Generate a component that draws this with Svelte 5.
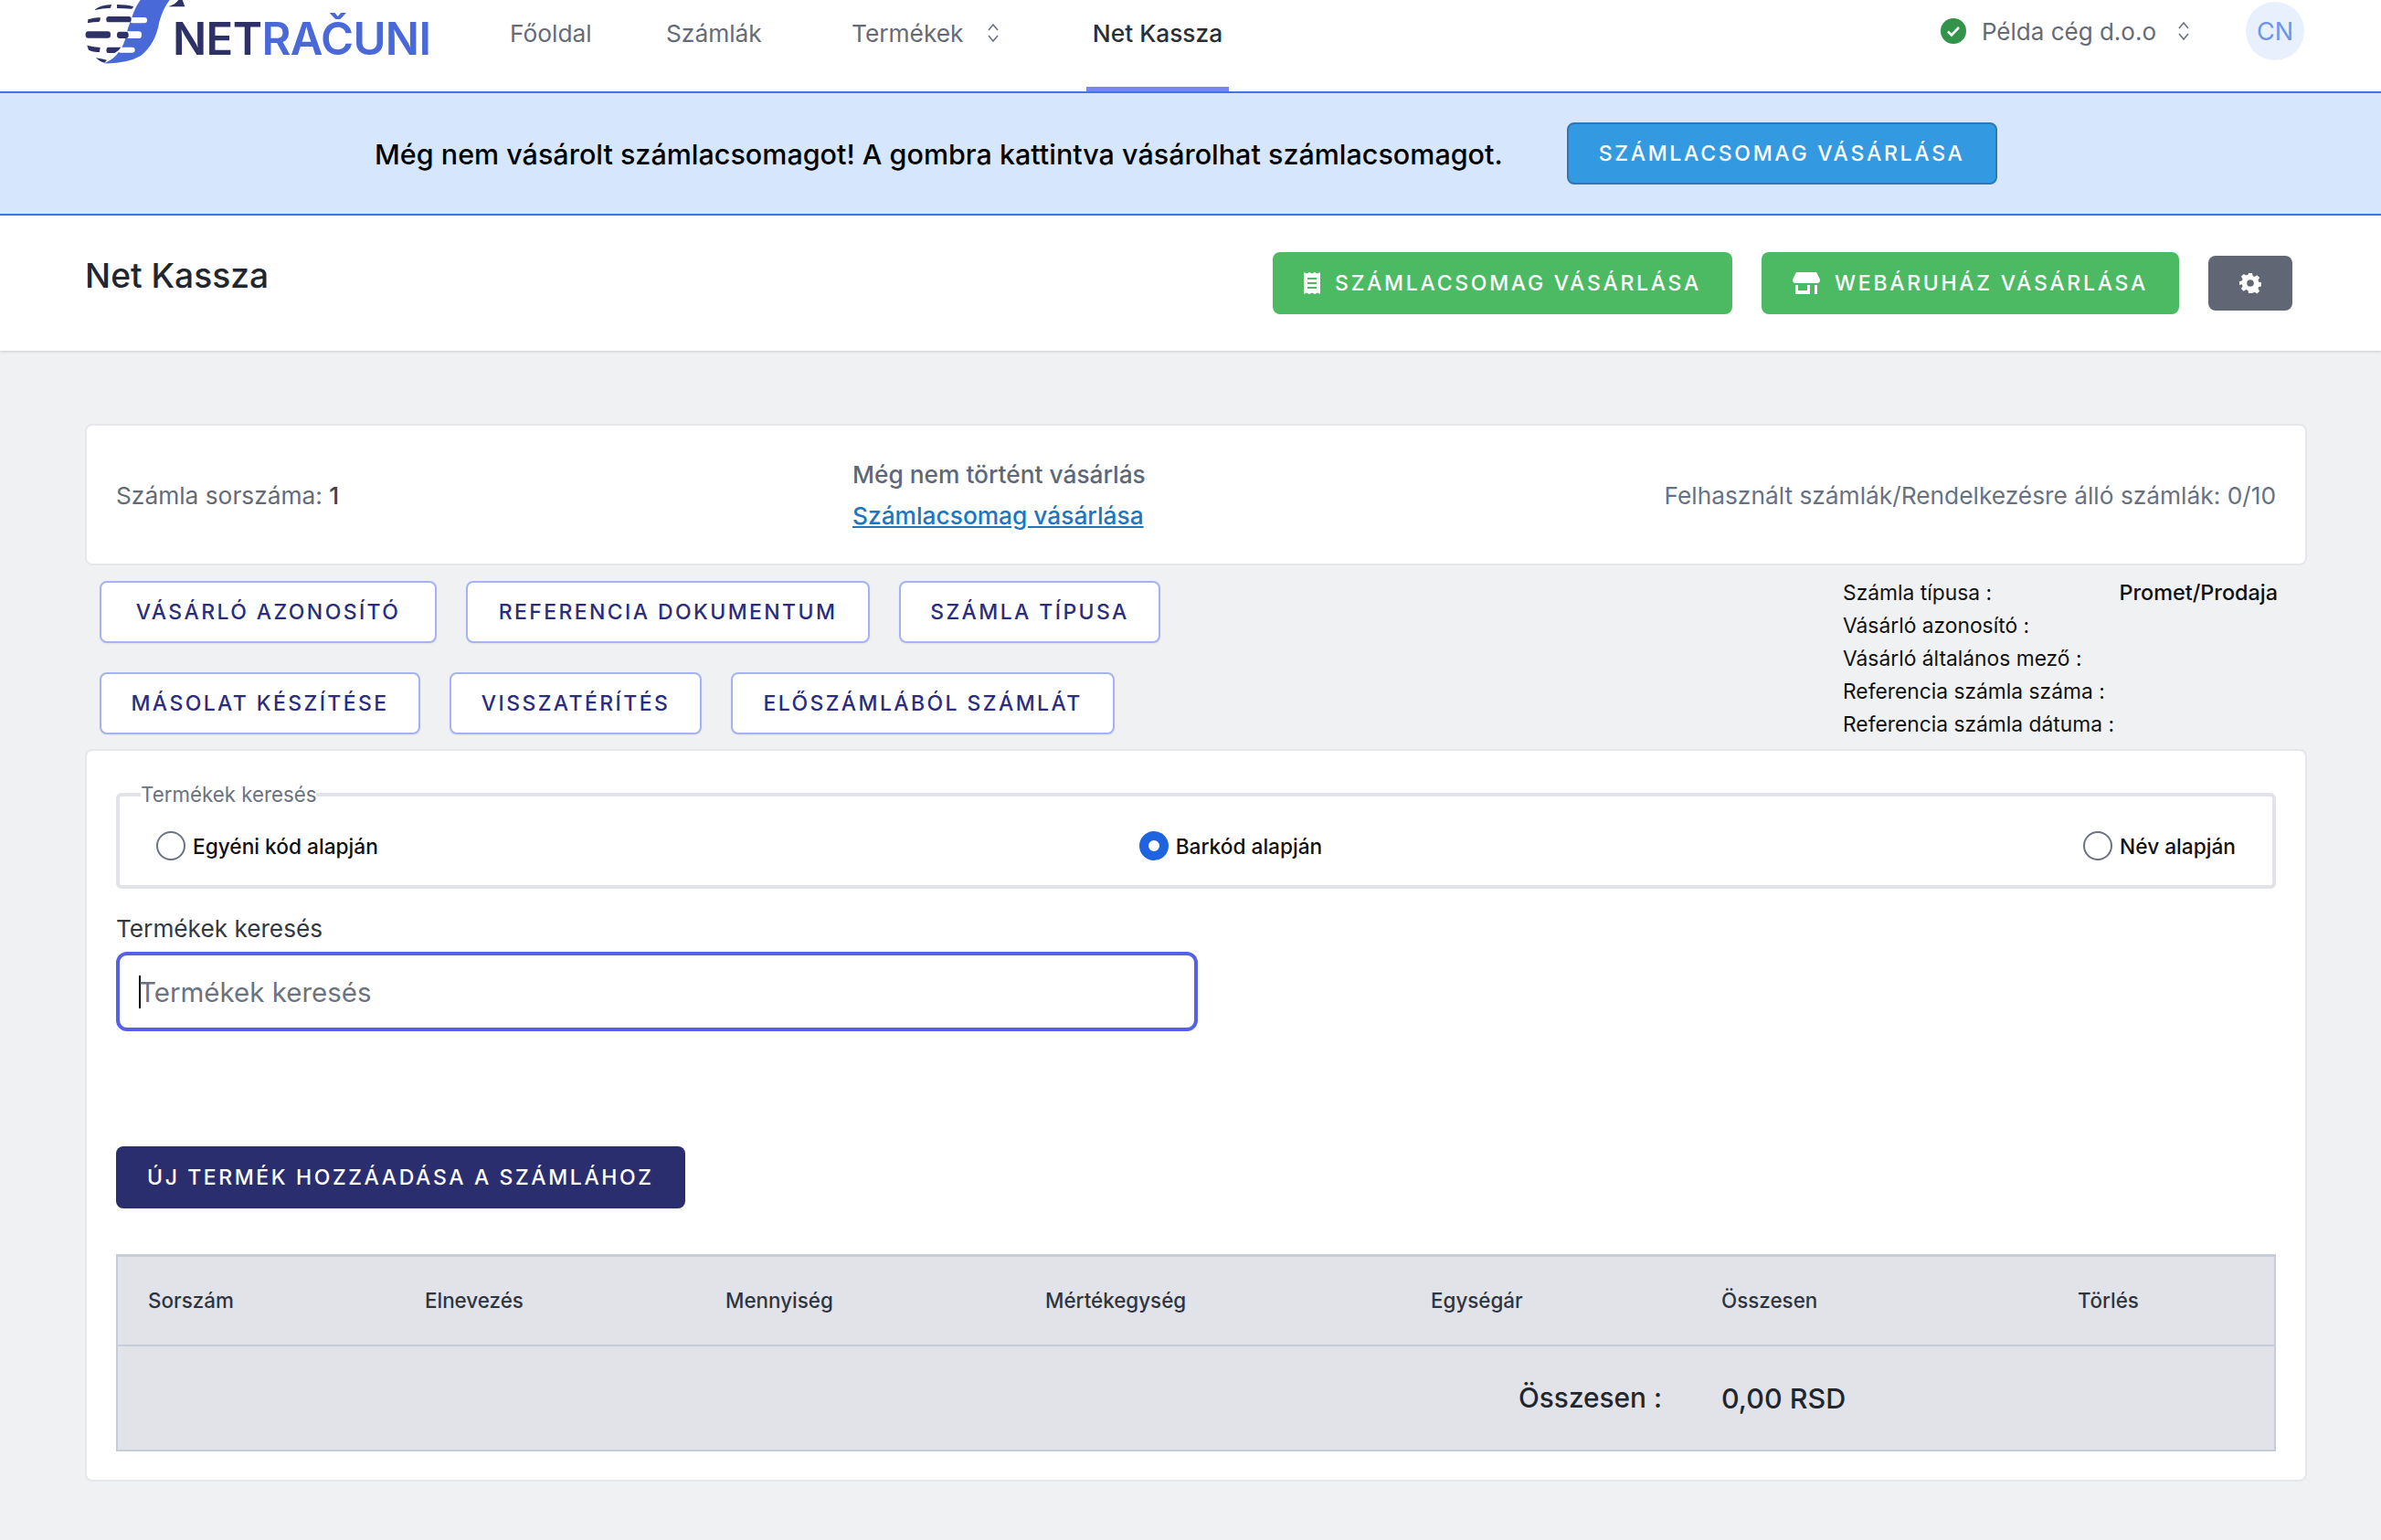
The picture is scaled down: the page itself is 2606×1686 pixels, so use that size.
<script>
    const navLinks = [
        { label: "Főoldal", width: 171 },
        { label: "Számlák", width: 203 },
        { label: "Termékek", width: 266, chevron: true },
        { label: "Net Kassza", width: 156, active: true }
    ];
    const firstRow = [
        { label: "VÁSÁRLÓ AZONOSÍTÓ", width: 369 },
        { label: "REFERENCIA DOKUMENTUM", width: 442 },
        { label: "SZÁMLA TÍPUSA", width: 286 }
    ];
    const secondRow = [
        { label: "MÁSOLAT KÉSZÍTÉSE", width: 351 },
        { label: "VISSZATÉRÍTÉS", width: 276 },
        { label: "ELŐSZÁMLÁBÓL SZÁMLÁT", width: 420 }
    ];
    const info = [
        ["Számla típusa :", "Promet/Prodaja"],
        ["Vásárló azonosító :", ""],
        ["Vásárló általános mező :", ""],
        ["Referencia számla száma :", ""],
        ["Referencia számla dátuma :", ""]
    ];
    const columns = ["Sorszám", "Elnevezés", "Mennyiség", "Mértékegység", "Egységár", "Összesen", "Törlés"];
</script>

<div class="page">
    <nav class="nav">
        <div class="brand">
            <svg class="logo" viewBox="38 0 330 210" aria-hidden="true">
                <path fill="#4a69d8" d="M220 0 L316 0 Q294 28 282 72 Q270 145 220 184 Q175 210 100 208 Q150 190 170 130 Q178 90 192 57 Q202 25 220 0Z"/>
                <g fill="#fff">
                    <rect x="186" y="57" width="56" height="19" rx="9"/>
                    <rect x="170" y="103" width="54" height="23" rx="10"/>
                    <rect x="146" y="155" width="56" height="18" rx="9"/>
                </g>
                <g fill="#2d3166">
                    <path d="M72 30 Q90 17 125 15 L122 26 Q95 27 70 33Z"/>
                    <path d="M143 15 Q175 15 198 22 L192 29 Q165 27 143 27Z"/>
                    <path d="M48 64 Q65 58 88 57 Q90 66 84 72 Q65 72 47 76Z"/>
                    <rect x="108" y="54" width="82" height="19" rx="8"/>
                    <rect x="40" y="103" width="82" height="22" rx="9"/>
                    <rect x="143" y="104" width="38" height="22" rx="9"/>
                    <path d="M45 149 Q66 155 88 156 L86 171 Q62 171 50 164Z"/>
                    <path d="M112 155 L156 155 Q150 166 136 174 L112 174 Q104 166 112 155Z"/>
                    <path d="M74 190 Q90 192 110 197 L102 206 Q88 204 74 190Z"/>
                    <path d="M312 22 Q335 14 345 0 L358 0 L366 22Z"/>
                </g>
            </svg>
            <span class="wordmark"><span class="net">NET</span><span class="racuni">RAČUNI</span></span>
        </div>
        <ul class="links">
            {#each navLinks as link}
                <li class:active={link.active} style="width:{link.width}px">
                    <span>{link.label}</span>
                    {#if link.chevron}
                        <svg class="updown" viewBox="0 0 14 24"><path d="M2 9 7 3l5 6M2 15l5 6 5-6"/></svg>
                    {/if}
                </li>
            {/each}
        </ul>
        <div class="account">
            <svg class="check" viewBox="0 0 28 28"><circle cx="14" cy="14" r="14" fill="#34934b"/><path d="M8 14.5l4 4 8-8.5" fill="none" stroke="#fff" stroke-width="2.6"/></svg>
            <span class="company">Példa cég d.o.o</span>
            <svg class="updown" viewBox="0 0 14 24"><path d="M2 9 7 3l5 6M2 15l5 6 5-6"/></svg>
            <span class="avatar">CN</span>
        </div>
    </nav>

    <div class="banner">
        <p>Még nem vásárolt számlacsomagot! A gombra kattintva vásárolhat számlacsomagot.</p>
        <button class="btn btn-blue">SZÁMLACSOMAG VÁSÁRLÁSA</button>
    </div>

    <header class="subheader">
        <h1>Net Kassza</h1>
        <div class="actions">
            <button class="btn btn-green">
                <svg class="ic-receipt" viewBox="0 0 18 24"><path fill="#fff" fill-rule="evenodd" d="M0 0l3 1.500L6 0l3 1.500L12 0l3 1.500L18 0v24l-3-1.500L12 24l-3-1.500L6 24l-3-1.500L0 24ZM4 6v2h10V6Zm0 5v2h10v-2Zm0 5v2h10v-2Z"/></svg>
                SZÁMLACSOMAG VÁSÁRLÁSA
            </button>
            <button class="btn btn-green">
                <svg class="ic-store" viewBox="0 0 30 24"><path fill="#fff" fill-rule="evenodd" d="M4 0h22l4 8q0 4-3 4H3Q0 12 0 8ZM3 14h3v6h10v-6h3v10H3Zm21 0h3v10h-3Z"/></svg>
                WEBÁRUHÁZ VÁSÁRLÁSA
            </button>
            <button class="btn-gear" aria-label="Beállítások">
                <svg viewBox="0 0 24 24"><path fill="#fff" fill-rule="evenodd" d="M10 1h4l.6 3.100 2 .9 2.700-1.700 2.800 2.800-1.700 2.700.9 2 3.100.6v4l-3.100.6-.9 2 1.700 2.700-2.800 2.800-2.700-1.700-2 .9L14 23h-4l-.6-3.100-2-.9-2.700 1.700-2.800-2.800 1.700-2.700-.9-2L-.4 14v-4l3.100-.6.9-2L1.900 4.700l2.800-2.800 2.700 1.700 2-.9ZM12 8.200a3.800 3.800 0 1 0 0 7.600 3.800 3.800 0 0 0 0-7.600Z"/></svg>
            </button>
        </div>
    </header>

    <main class="content">
        <section class="card stats">
            <div class="stat-left">Számla sorszáma: <b>1</b></div>
            <div class="stat-mid">
                <div class="no-purchase">Még nem történt vásárlás</div>
                <a href="#top">Számlacsomag vásárlása</a>
            </div>
            <div class="stat-right">Felhasznált számlák/Rendelkezésre álló számlák: 0/10</div>
        </section>

        <section class="tools">
            <div class="tool-rows">
                <div class="tool-row">
                    {#each firstRow as item}
                        <button class="btn btn-outline" style="width:{item.width}px">{item.label}</button>
                    {/each}
                </div>
                <div class="tool-row">
                    {#each secondRow as item}
                        <button class="btn btn-outline" style="width:{item.width}px">{item.label}</button>
                    {/each}
                </div>
            </div>
            <dl class="info">
                {#each info as [name, value]}
                    <div>
                        <dt>{name}</dt>
                        <dd>{value}</dd>
                    </div>
                {/each}
            </dl>
        </section>

        <section class="card search">
            <fieldset>
                <legend>Termékek keresés</legend>
                <label><span class="radio"></span>Egyéni kód alapján</label>
                <label><span class="radio checked"></span>Barkód alapján</label>
                <label><span class="radio"></span>Név alapján</label>
            </fieldset>

            <div class="field-label">Termékek keresés</div>
            <div class="input"><span class="caret"></span>Termékek keresés</div>

            <button class="btn btn-navy">ÚJ TERMÉK HOZZÁADÁSA A SZÁMLÁHOZ</button>

            <table>
                <thead>
                    <tr>
                        {#each columns as col}
                            <th>{col}</th>
                        {/each}
                    </tr>
                </thead>
                <tfoot>
                    <tr>
                        <td colspan="5" class="total-label">Összesen :</td>
                        <td colspan="2" class="total-value">0,00 RSD</td>
                    </tr>
                </tfoot>
            </table>
        </section>
    </main>
</div>

<style>
    :global(body) {
        margin: 0;
        background: #f0f1f3;
        font-family: Inter, "Liberation Sans", sans-serif;
    }
    .page {
        min-height: 1686px;
        display: flex;
        flex-direction: column;
    }
    .nav {
        height: 100px;
        background: #fff;
        display: flex;
        padding: 0 84px 0 93px;
        box-sizing: border-box;
    }
    .brand {
        width: 465px;
        display: flex;
        height: 70px;
        flex-shrink: 0;
    }
    .logo {
        width: 110px;
        height: 70px;
    }
    .wordmark {
        margin-left: -14px;
        margin-top: 16px;
        font-size: 49px;
        line-height: 54px;
        font-weight: 600;
        letter-spacing: -0.6px;
    }
    .net { color: #2d3166; }
    .racuni { color: #4a69d8; }
    .links {
        display: flex;
        list-style: none;
        margin: 0;
        padding: 0;
    }
    .links li {
        box-sizing: border-box;
        height: 100px;
        font-size: 26.3px;
        color: #656b76;
        display: flex;
        align-items: flex-start;
        padding-top: 20px;
        line-height: 34px;
        gap: 25px;
    }
    .links li:last-child { margin-left: -9px; }
    .links li.active {
        color: #2a2e37;
        justify-content: center;
        font-weight: 500;
        border-bottom: 5px solid #7f83ee;
    }
    .updown {
        width: 14px;
        height: 24px;
        flex-shrink: 0;
        margin-top: 4px;
        fill: none;
        stroke: #6b7280;
        stroke-width: 1.600;
    }
    .account {
        margin-left: auto;
        display: flex;
        align-items: center;
        height: 68px;
        color: #656b76;
        font-size: 26px;
    }
    .check {
        width: 28px;
        height: 28px;
        margin-right: 17px;
    }
    .company { margin-right: 23px; }
    .account .updown { margin-top: 0; }
    .avatar {
        width: 64px;
        height: 64px;
        border-radius: 50%;
        background: #e8f0fe;
        color: #6e93e8;
        font-size: 27px;
        margin-left: 61px;
        display: flex;
        align-items: center;
        justify-content: center;
    }
    .banner {
        height: 136px;
        box-sizing: border-box;
        background: #d6e6fd;
        border-top: 2px solid #3b78e7;
        border-bottom: 2px solid #3b78e7;
        display: flex;
        align-items: center;
        padding-left: 410px;
        gap: 70px;
    }
    .banner p {
        margin: 0;
        font-size: 30.5px;
        font-weight: 500;
        color: #000;
    }
    .btn {
        box-sizing: border-box;
        height: 68px;
        padding: 0 34px;
        border-radius: 8px;
        font-family: inherit;
        font-size: 23px;
        font-weight: 500;
        letter-spacing: 2.7px;
        white-space: nowrap;
        cursor: pointer;
    }
    .btn-blue {
        background: #3399e0;
        border: 2px solid #2a78bd;
        color: #fff;
        padding: 0 33px;
    }
    .subheader {
        height: 148px;
        box-sizing: border-box;
        background: #fff;
        box-shadow: 0 1px 3px rgba(0, 0, 0, 0.16);
        padding: 40px 97px 0 93px;
        display: flex;
        justify-content: space-between;
        align-items: flex-start;
    }
    h1 {
        margin: 0;
        font-size: 37.2px;
        line-height: 52px;
        font-weight: 500;
        color: #22262e;
    }
    .actions {
        display: flex;
        gap: 32px;
        align-items: center;
        height: 68px;
    }
    .btn-green {
        background: #4cb963;
        border: none;
        color: #fff;
        display: flex;
        align-items: center;
        gap: 16px;
    }
    .ic-receipt { width: 18px; height: 24px; }
    .ic-store { width: 30px; height: 24px; }
    .btn-gear {
        width: 92px;
        height: 60px;
        border: none;
        border-radius: 8px;
        background: #606673;
        display: flex;
        align-items: center;
        justify-content: center;
        padding: 0;
    }
    .btn-gear svg { width: 24px; height: 24px; }
    .content {
        padding: 80px 81px 64px 93px;
        display: flex;
        flex-direction: column;
    }
    .card {
        background: #fff;
        border: 2px solid #e5e7eb;
        border-radius: 8px;
        box-sizing: border-box;
    }
    .stats {
        height: 155px;
        display: grid;
        grid-template-columns: 1fr 1fr 1fr;
        align-items: center;
        padding: 0 32px;
        font-size: 26.3px;
        color: #656b76;
    }
    .stat-left { margin-top: 2px; }
    .stat-left b { font-weight: 500; color: #444; }
    .stat-mid {
        margin-left: 18px;
        font-weight: 500;
        color: #5e6778;
        line-height: 45px;
    }
    .stat-mid a {
        color: #1f76bd;
        text-decoration: underline;
    }
    .stat-right {
        margin-top: 2px;
        text-align: right;
        white-space: nowrap;
        color: #677183;
        justify-self: end;
    }
    .tools {
        display: flex;
        justify-content: space-between;
        padding: 17px 32px 0 16px;
        height: 201px;
        box-sizing: border-box;
    }
    .tool-rows {
        display: flex;
        flex-direction: column;
        gap: 32px;
    }
    .tool-row {
        display: flex;
        gap: 32px;
    }
    .btn-outline {
        background: #fff;
        border: 2px solid #a3b3f3;
        color: #2a2d7c;
        box-shadow: 0 1px 2px rgba(0, 0, 0, 0.06);
        letter-spacing: 2.4px;
        padding: 0;
    }
    .info {
        margin: -5px 0 0;
        width: 476px;
        font-size: 22.8px;
        line-height: 36px;
        color: #111;
    }
    .info div {
        display: flex;
        justify-content: space-between;
    }
    dd {
        margin: 0;
        font-weight: 500;
        font-size: 23.4px;
    }
    .search {
        height: 802px;
        padding: 34px 32px 0;
    }
    fieldset {
        margin: 0;
        height: 117px;
        box-sizing: border-box;
        border: 4px solid #e2e3e8;
        border-radius: 6px;
        padding: 27px 40px 0 40px;
        display: flex;
        justify-content: space-between;
        align-items: flex-start;
    }
    legend {
        font-size: 22.3px;
        color: #6b7280;
        padding: 0;
        margin-left: -17px;
    }
    fieldset label {
        display: flex;
        align-items: center;
        gap: 8px;
        font-size: 22.7px;
        font-weight: 500;
        color: #111;
    }
    .radio {
        width: 32px;
        height: 32px;
        box-sizing: border-box;
        border: 2px solid #6b7280;
        border-radius: 50%;
    }
    .radio.checked {
        border: 10px solid #1e63e0;
    }
    .field-label {
        margin-top: 26px;
        font-size: 26.2px;
        line-height: 36px;
        color: #333842;
    }
    .input {
        margin-top: 7px;
        width: 1184px;
        height: 87px;
        box-sizing: border-box;
        border: 4px solid #5662e4;
        border-radius: 12px;
        padding-left: 21px;
        display: flex;
        align-items: center;
        font-size: 29.5px;
        color: #6b7280;
    }
    .caret {
        width: 2px;
        height: 36px;
        background: #000;
        margin-right: -2px;
    }
    .btn-navy {
        display: block;
        margin-top: 126px;
        background: #2a2d6e;
        border: none;
        color: #fff;
        letter-spacing: 2.6px;
    }
    table {
        margin-top: 50px;
        width: 100%;
        table-layout: fixed;
        border-collapse: collapse;
        background: #e1e3e8;
        border: 2px solid #c6cdd8;
        border-top-width: 3px;
    }
    th {
        box-sizing: border-box;
        height: 98px;
        padding: 0 0 0 33px;
        text-align: left;
        font-size: 22.4px;
        font-weight: 500;
        color: #2f3540;
        border-bottom: 2px solid #c6cdd8;
    }
    th:nth-child(1) { width: 304px; }
    th:nth-child(2) { width: 329px; }
    th:nth-child(3) { width: 350px; }
    th:nth-child(4) { width: 422px; }
    th:nth-child(5) { width: 318px; }
    th:nth-child(6) { width: 390px; }
    td {
        height: 111px;
        font-size: 30.5px;
        font-weight: 500;
        color: #22262e;
    }
    .total-label {
        text-align: right;
        padding-right: 32px;
        font-size: 29.8px;
    }
    .total-value { padding-left: 33px; }
</style>
